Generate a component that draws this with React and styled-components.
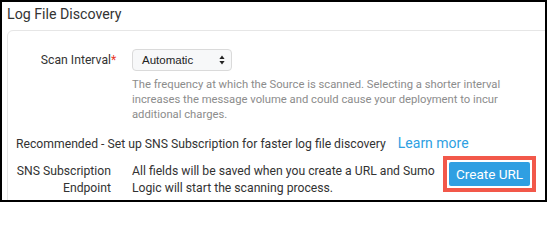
import React from "react";
import styled, { createGlobalStyle } from "styled-components";

const GlobalStyle = createGlobalStyle`
  html, body { margin: 0; padding: 0; background: #fff; }
  body { font-family: Roboto, "Liberation Sans", sans-serif; color: #333; }
`;

const Frame = styled.div`
  box-sizing: border-box;
  width: 547px;
  height: 202px;
  border: 2px solid #000;
  overflow: hidden;
  background: #fff;
`;

const Header = styled.div`
  height: 28px;
  padding-left: 5px;
  font-size: 14.2px;
  line-height: 25px;
  color: #333;
`;

const Card = styled.div`
  margin-left: 5px;
  margin-right: -20px;
  border: 1px solid #e6e6e6;
  border-radius: 6px 0 0 0;
  height: 200px;
  padding-top: 18px;
`;

const FieldRow = styled.div`
  display: flex;
  align-items: ${props => props.align || "center"};
  margin-top: ${props => props.top || 0}px;
`;

const Label = styled.div`
  width: 103px;
  flex: none;
  text-align: right;
  font-size: 12.2px;
  line-height: 16.5px;
  color: #333;
  padding-top: ${props => props.offset || 0}px;
`;

const LabelText = styled.span`
  position: relative;
`;

const Required = styled.span`
  position: absolute;
  left: 100%;
  top: -1px;
  color: #e8392b;
`;

const Control = styled.div`
  margin-left: 21px;
`;

const SelectBox = styled.div`
  box-sizing: border-box;
  width: 100px;
  height: 22px;
  border: 1px solid #dadada;
  border-radius: 4px;
  background: #f7f8f9;
  display: flex;
  align-items: center;
  justify-content: space-between;
  padding: 0 6px 0 9px;
  font-family: "Liberation Sans", Arial, sans-serif;
  font-size: 11.5px;
  color: #222;
`;

const Help = styled.div`
  margin: 6px 0 0 124px;
  max-width: 405px;
  font-size: 11.25px;
  line-height: 15px;
  color: #8c8c8c;
`;

const Recommend = styled.div`
  margin: 11px 0 0 8px;
  display: flex;
  align-items: baseline;
  gap: 12px;
  height: 20px;
  font-size: 12.2px;
  line-height: 20px;
  color: #333;
`;

const Link = styled.a`
  font-size: 14px;
  color: #2e9fe2;
  text-decoration: none;
`;

const EndpointText = styled.div`
  width: 305px;
  margin-left: 21px;
  padding-top: 7px;
  font-size: 12.2px;
  line-height: 16.5px;
  color: #333;
`;

const Highlight = styled.div`
  margin-left: 6px;
  border: 4px solid #f2584a;
  padding: 2px;
  display: flex;
`;

const Button = styled.button`
  width: 81px;
  height: 24px;
  border: none;
  border-radius: 2px;
  background: #2f9fe2;
  color: #fff;
  font-family: Roboto, "Liberation Sans", sans-serif;
  font-size: 13.5px;
  padding: 0;
`;

function UpDown() {
  return (
    <svg width="6" height="10" viewBox="0 0 6 10">
      <path d="M3 0.5 L5.6 4 L0.4 4 Z" fill="#222" />
      <path d="M3 9.5 L5.6 6 L0.4 6 Z" fill="#222" />
    </svg>
  );
}

export default function App() {
  return (
    <Frame>
      <GlobalStyle />
      <Header>Log File Discovery</Header>
      <Card>
        <FieldRow>
          <Label>
            <LabelText>
              Scan Interval<Required>*</Required>
            </LabelText>
          </Label>
          <Control>
            <SelectBox>
              <span>Automatic</span>
              <UpDown />
            </SelectBox>
          </Control>
        </FieldRow>
        <Help>
          The frequency at which the Source is scanned. Selecting a shorter interval
          increases the message volume and could cause your deployment to incur
          additional charges.
        </Help>
        <Recommend>
          <span>Recommended - Set up SNS Subscription for faster log file discovery</span>
          <Link href="#">Learn more</Link>
        </Recommend>
        <FieldRow align="flex-start" top={3}>
          <Label offset={7}>
            SNS Subscription
            <br />
            Endpoint
          </Label>
          <EndpointText>
            All fields will be saved when you create a URL and Sumo Logic will start
            the scanning process.
          </EndpointText>
          <Highlight>
            <Button>Create URL</Button>
          </Highlight>
        </FieldRow>
      </Card>
    </Frame>
  );
}
